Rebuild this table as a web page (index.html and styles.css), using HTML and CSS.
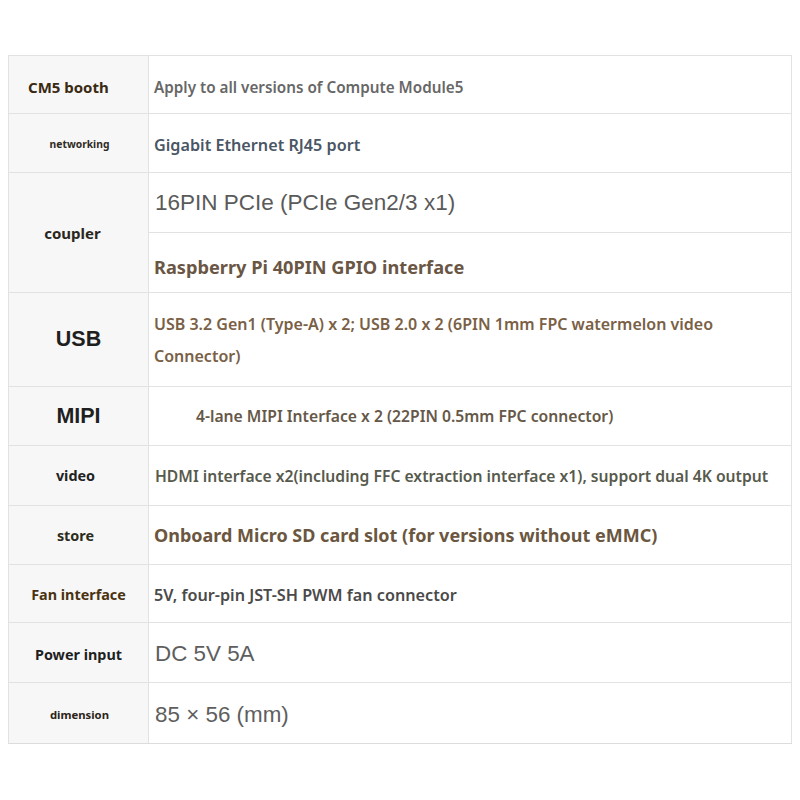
FILE: index.html
```html
<!DOCTYPE html>
<html>
<head>
<meta charset="utf-8">
<link rel="stylesheet" href="styles.css">
</head>
<body>
<div class="page">
  <div class="spec">
    <div class="key k-cm5 r1">CM5 booth</div>
    <div class="val v-cm5 r1">Apply to all versions of Compute Module5</div>

    <div class="key k-net r2">networking</div>
    <div class="val v-net r2">Gigabit Ethernet RJ45 port</div>

    <div class="key k-coupler r3">coupler</div>
    <div class="val v-pcie r3a">16PIN PCIe (PCIe Gen2/3 x1)</div>
    <div class="val v-gpio r3b">Raspberry Pi 40PIN GPIO interface</div>

    <div class="key k-big r4">USB</div>
    <div class="val v-usb r4">USB 3.2 Gen1 (Type-A) x 2; USB 2.0 x 2 (6PIN 1mm FPC watermelon video<br>Connector)</div>

    <div class="key k-big r5">MIPI</div>
    <div class="val v-mipi r5">4-lane MIPI Interface x 2 (22PIN 0.5mm FPC connector)</div>

    <div class="key k-mid r6">video</div>
    <div class="val v-video r6">HDMI interface x2(including FFC extraction interface x1), support dual 4K output</div>

    <div class="key k-mid k-store r7">store</div>
    <div class="val v-store r7">Onboard Micro SD card slot (for versions without eMMC)</div>

    <div class="key k-fan r8">Fan interface</div>
    <div class="val v-fan r8">5V, four-pin JST-SH PWM fan connector</div>

    <div class="key k-power r9">Power input</div>
    <div class="val v-plain r9">DC 5V 5A</div>

    <div class="key k-dim r10">dimension</div>
    <div class="val v-plain r10">85 × 56 (mm)</div>
  </div>
</div>
</body>
</html>
```

FILE: styles.css
```css
* { box-sizing: border-box; }
html, body { margin: 0; padding: 0; background: #ffffff; }
body { font-family: "Noto Sans", "Open Sans", sans-serif; }

.page { padding: 55px 8px 0 8px; }

.spec {
  display: grid;
  grid-template-columns: 140px 1fr;
  grid-template-rows: 58px 59px 60px 60px 94px 59px 60px 59px 58px 60px 60px;
  border-top: 1px solid #e2e2e2;
  border-left: 1px solid #e2e2e2;
  border-bottom: 1px solid #dcdcdc;
}

.key, .val {
  border-right: 1px solid #e2e2e2;
  border-bottom: 1px solid #e2e2e2;
  display: flex;
  align-items: center;
}
.r10 { border-bottom: none; }

.key {
  background: #f7f7f7;
  justify-content: center;
  text-align: center;
  font-weight: 700;
  color: #222222;
}
.val {
  background: #ffffff;
  padding-left: 5px;
  font-weight: 600;
}

.r1 { grid-row: 1; }
.r2 { grid-row: 2; }
.r3 { grid-row: 3 / span 2; }
.r3a { grid-row: 3; }
.r3b { grid-row: 4; }
.r4 { grid-row: 5; }
.r5 { grid-row: 6; }
.r6 { grid-row: 7; }
.r7 { grid-row: 8; }
.r8 { grid-row: 9; }
.r9 { grid-row: 10; }
.r10 { grid-row: 11; }
.key { grid-column: 1; }
.val { grid-column: 2; }

.k-cm5 { font-size: 15px; color: #3a2a12; justify-content: flex-start; padding-left: 19px; padding-top: 4px; }
.k-net { font-size: 10.3px; color: #2e2a24; padding-left: 2px; padding-top: 2px; }
.k-coupler { font-size: 15px; color: #2a2620; padding-right: 12px; }
.k-big { font-family: "Liberation Sans", Arial, sans-serif; font-size: 21.5px; color: #1f1f1f; }
.k-mid { font-size: 14.4px; color: #222; padding-right: 6px; }
.k-store { color: #2c2c1c; }
.k-fan { font-size: 14.4px; color: #4a3210; padding-top: 2px; }
.k-power { font-size: 14.4px; color: #1f1f1f; padding-top: 3px; }
.k-dim { font-size: 11.3px; color: #2c2418; padding-left: 2px; padding-top: 2px; }

.v-cm5 { font-size: 15.25px; color: #676767; padding-top: 4px; }
.v-net { font-size: 16.2px; color: #4a5665; padding-top: 3px; }
.v-pcie { font-family: "Liberation Sans", Arial, sans-serif; font-weight: 400; font-size: 22.5px; color: #5a5a5a; padding-left: 6px; }
.v-gpio { font-size: 18.2px; font-weight: 700; color: #6a5644; padding-top: 8px; }
.v-usb { font-size: 16px; color: #7a6045; line-height: 32px; }
.v-mipi { font-size: 15.7px; color: #665848; padding-left: 47px; }
.v-video { font-size: 15.7px; color: #575a4c; padding-left: 6px; }
.v-store { font-size: 18px; font-weight: 700; color: #6b5640; }
.v-fan { font-size: 16.2px; color: #4a4a4a; padding-top: 2px; }
.v-plain { font-family: "Liberation Sans", Arial, sans-serif; font-weight: 400; font-size: 22.4px; color: #5e5e5e; padding-left: 6px; padding-top: 3px; }
```
